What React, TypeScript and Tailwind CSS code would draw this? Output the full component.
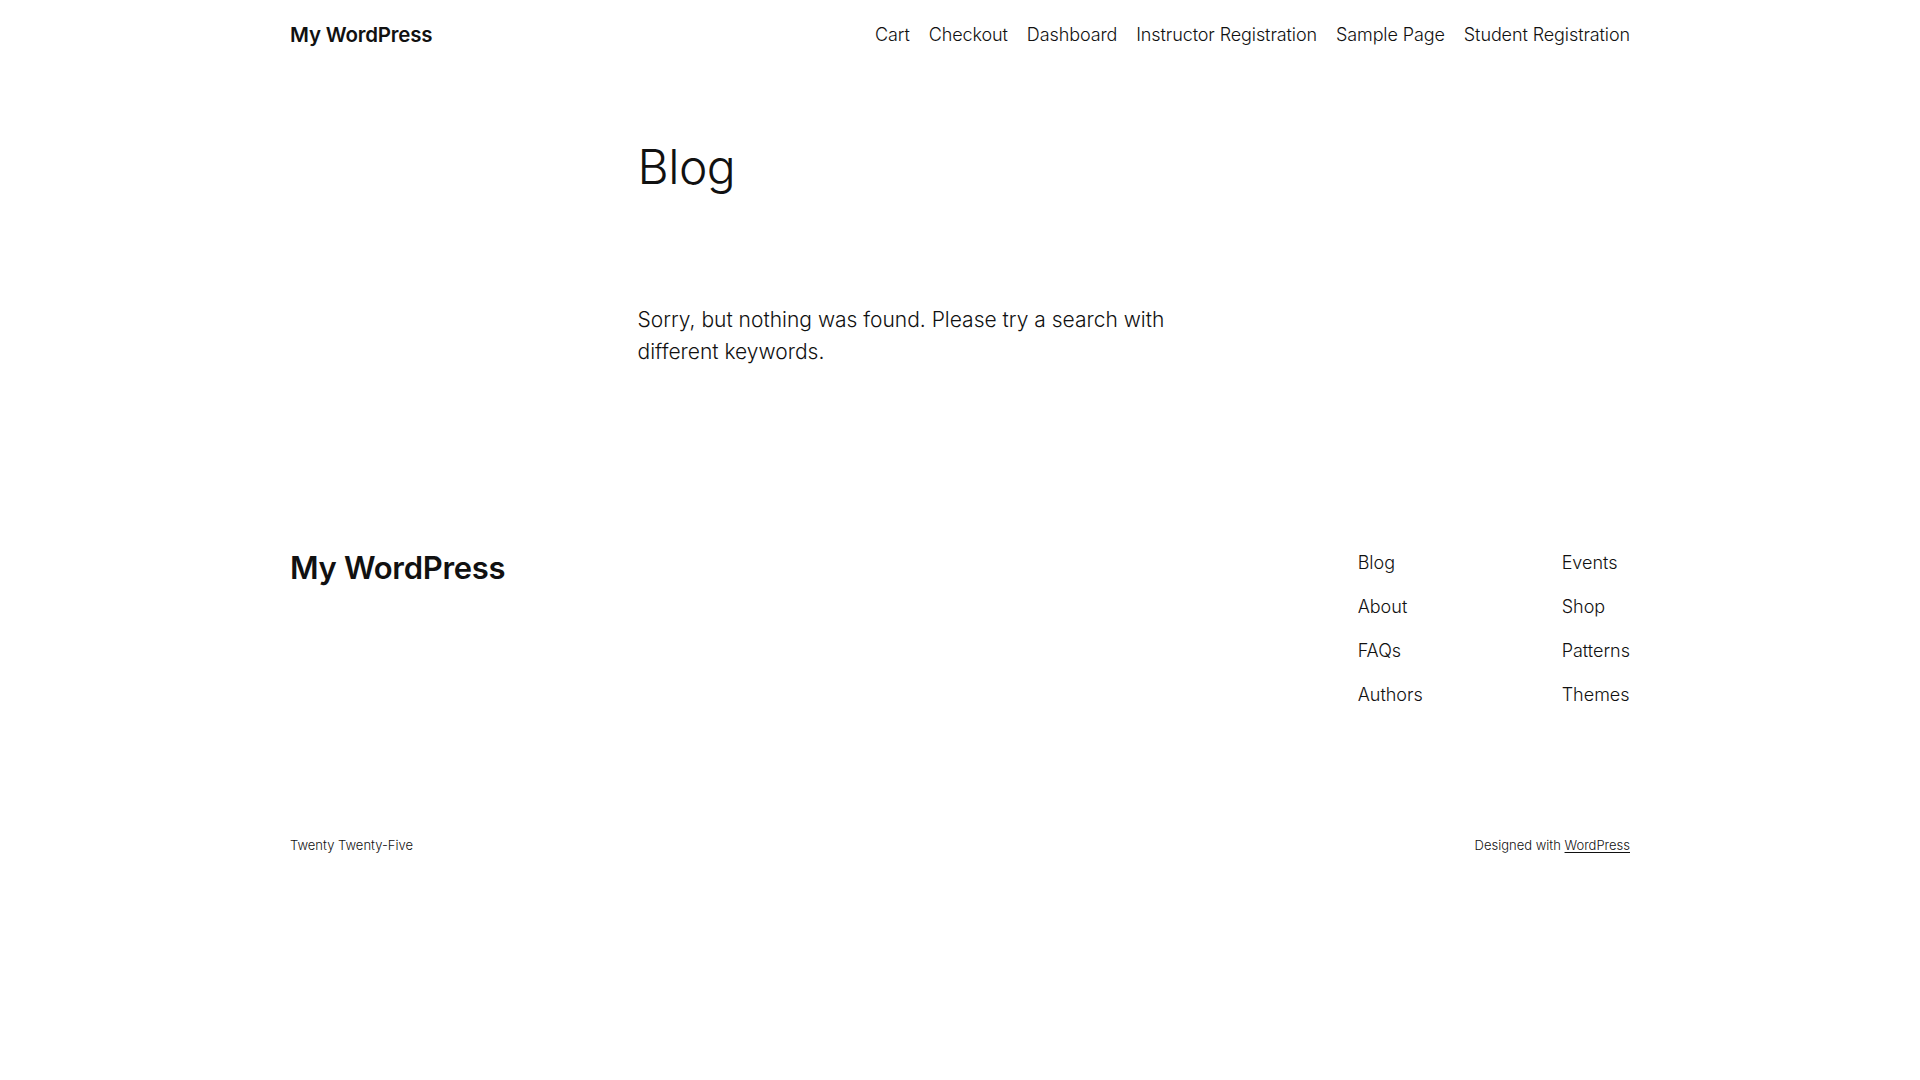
import React from "react";

const headerNav = ["Cart", "Checkout", "Dashboard", "Instructor Registration", "Sample Page", "Student Registration"];
const col1 = ["Blog", "About", "FAQs", "Authors"];
const col2 = ["Events", "Shop", "Patterns", "Themes"];

export default function App() {
  return (
    <div className="min-h-screen bg-white text-[#111111] font-['Inter','Noto_Sans',sans-serif] antialiased">
      <header className="mx-auto flex h-[70px] w-[1340px] items-center justify-between">
        <a href="#" className="text-[20.5px] font-semibold leading-[28px] tracking-[-0.2px]">My WordPress</a>
        <nav className="flex items-center gap-[19px] text-[18px] font-light leading-[28px] tracking-[-0.1px]">
          {headerNav.map((n) => (
            <a key={n} href="#">{n}</a>
          ))}
        </nav>
      </header>

      <main className="mx-auto w-[645px] pt-[70px]">
        <h1 className="text-[48px] font-light leading-[54px] tracking-[-0.5px]">Blog</h1>
        <p className="mt-[110px] text-[21px] font-light leading-[32px]">
          Sorry, but nothing was found. Please try a search with
          <br />
          different keywords.
        </p>
      </main>

      <footer className="mx-auto mt-[181px] w-[1340px]">
        <div className="flex items-start justify-between">
          <a href="#" className="mt-[1px] text-[31px] font-semibold leading-[36px] tracking-[-0.3px]">My WordPress</a>
          <div className="flex">
            <nav className="flex w-[204px] flex-col gap-[16px] text-[18px] font-light leading-[28px]">
              {col1.map((n) => (
                <a key={n} href="#">{n}</a>
              ))}
            </nav>
            <nav className="flex flex-col gap-[16px] text-[18px] font-light leading-[28px]">
              {col2.map((n) => (
                <a key={n} href="#">{n}</a>
              ))}
            </nav>
          </div>
        </div>
        <div className="mt-[126px] flex items-center justify-between text-[13px] font-light leading-[20px]">
          <p>Twenty Twenty-Five</p>
          <p>
            Designed with <a href="#" className="underline underline-offset-2">WordPress</a>
          </p>
        </div>
      </footer>
    </div>
  );
}
